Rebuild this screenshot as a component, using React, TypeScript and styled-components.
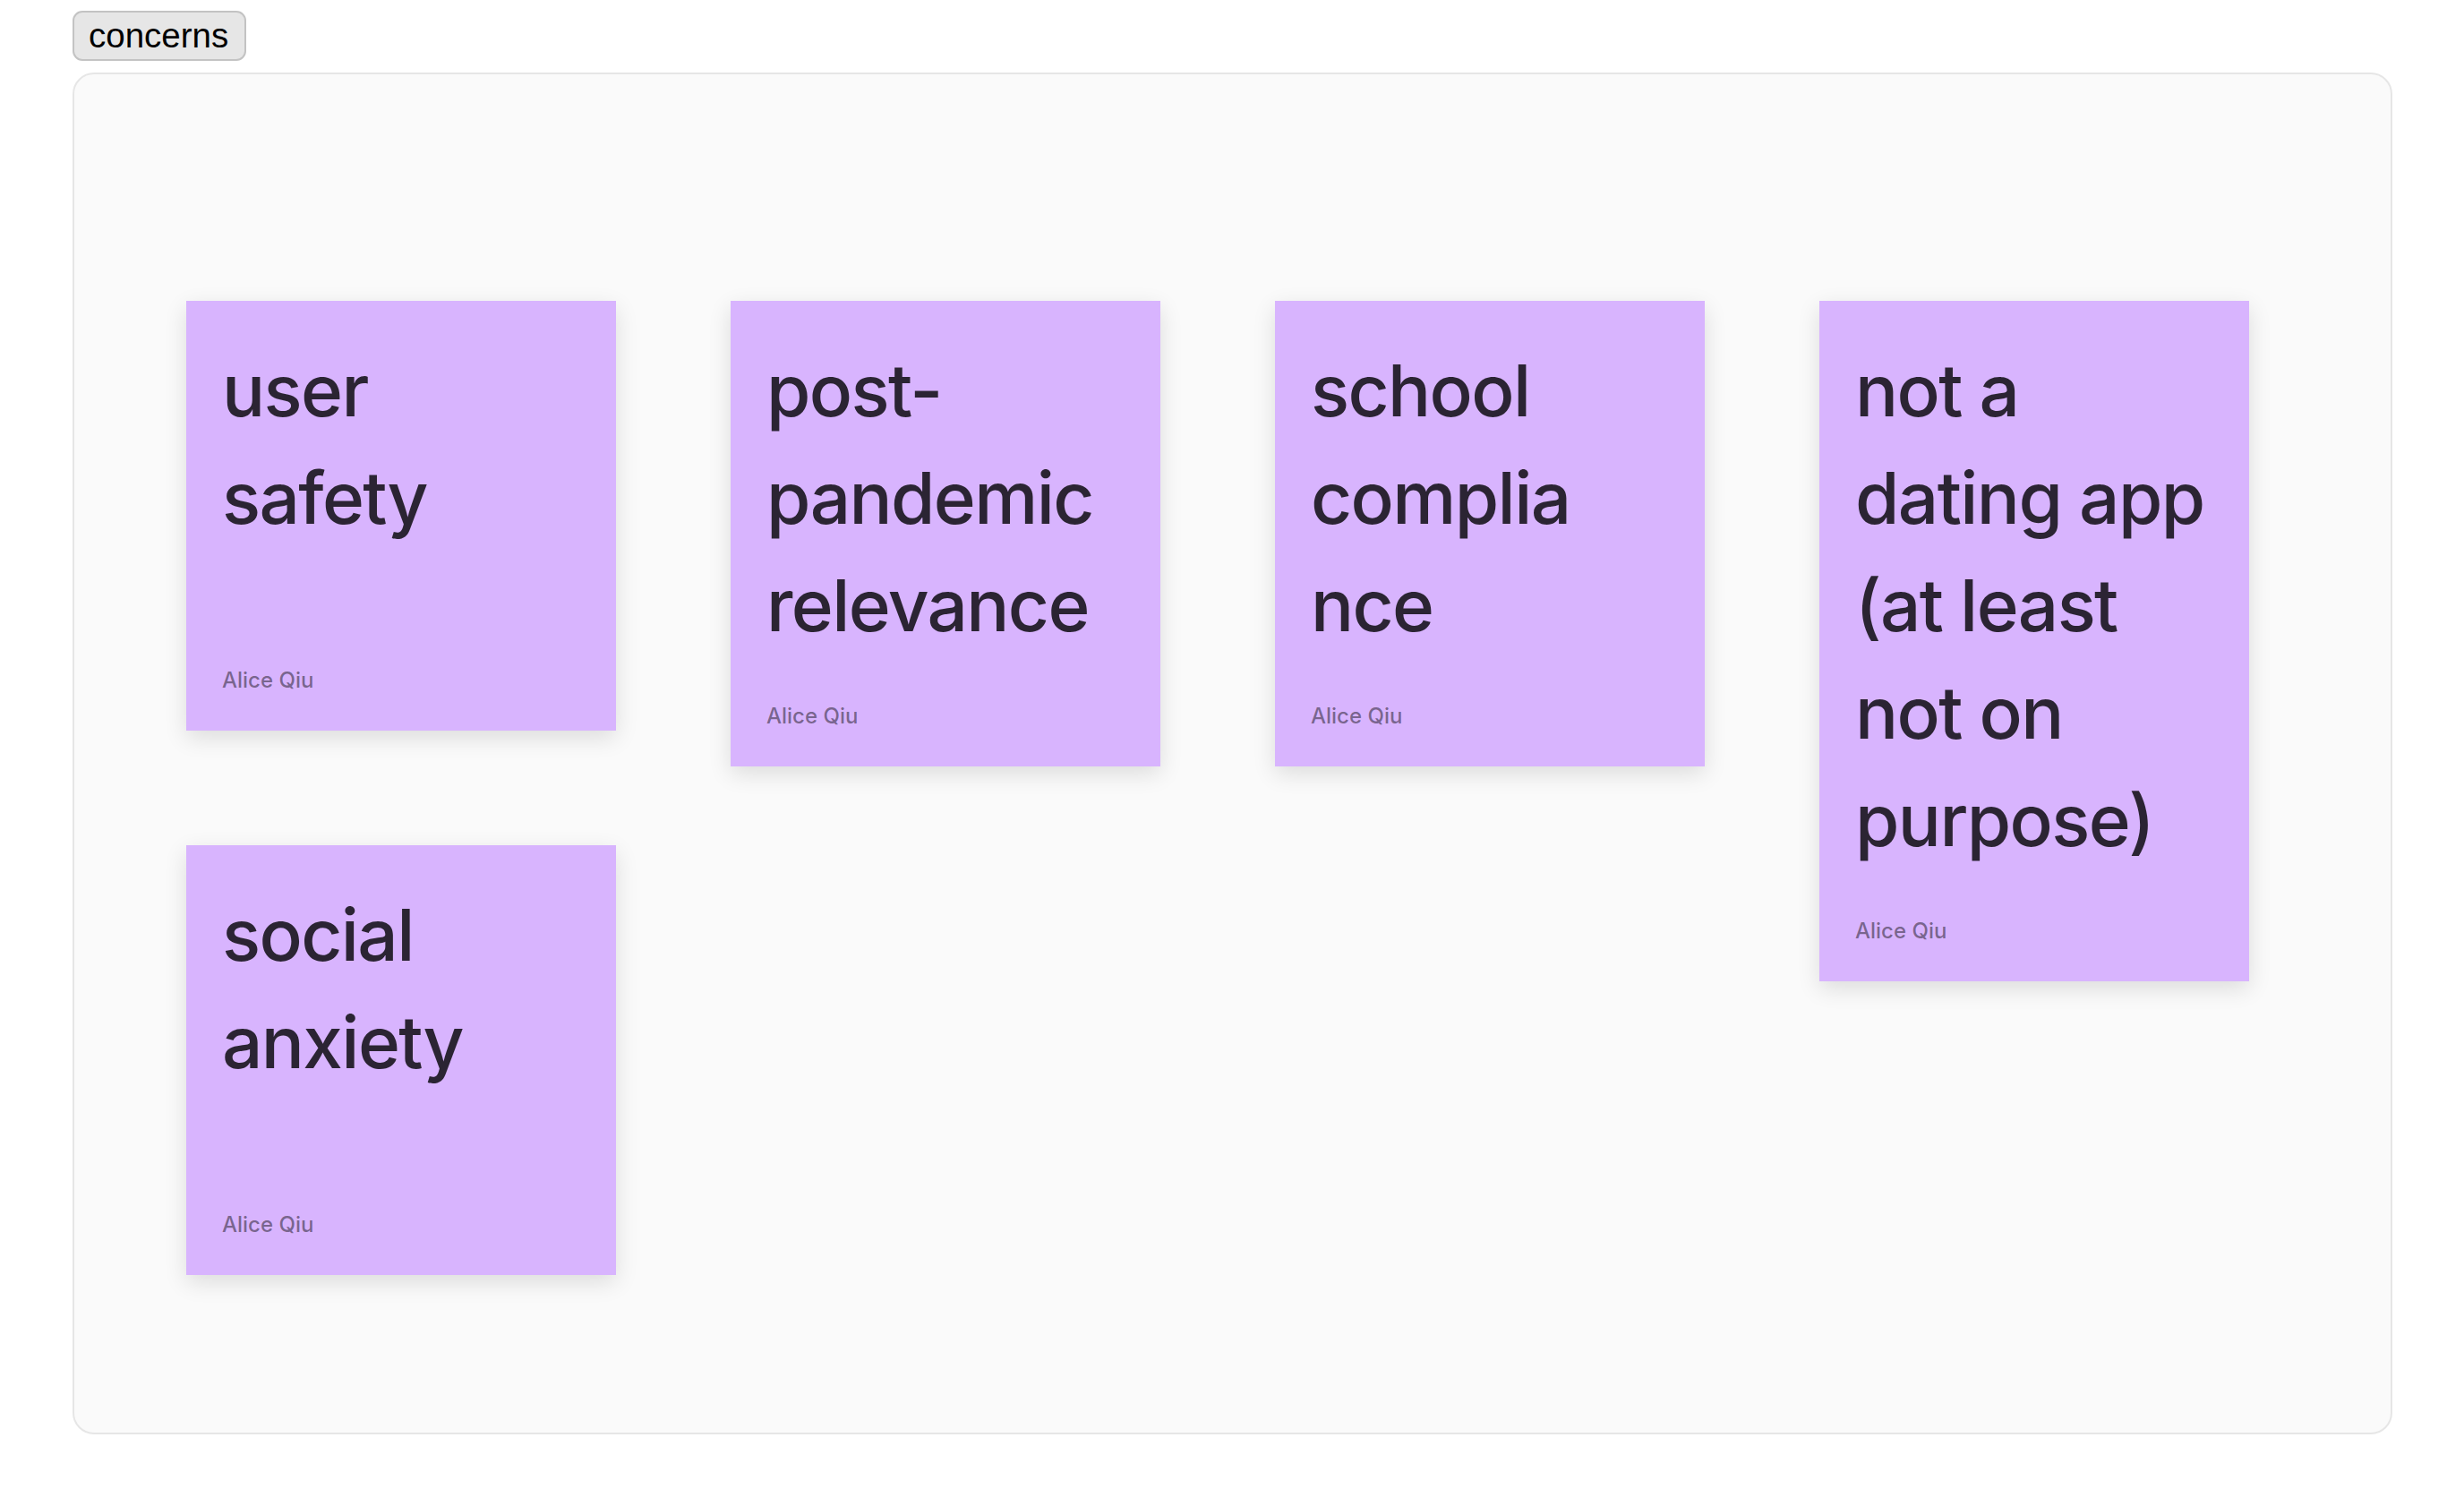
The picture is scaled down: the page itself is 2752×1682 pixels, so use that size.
import React from "react";
import styled, { createGlobalStyle } from "styled-components";

const GlobalStyle = createGlobalStyle`
  html, body {
    margin: 0;
    padding: 0;
    background: #ffffff;
  }
  * {
    box-sizing: border-box;
  }
`;

const Page = styled.div`
  display: flex;
  flex-direction: column;
  align-items: flex-start;
  gap: 14px;
  padding: 12px 80px 0 81px;
`;

const TagButton = styled.button`
  height: 56px;
  padding: 0 18px 0 16px;
  border: 2px solid #c3c3c3;
  border-radius: 11px;
  background: #e6e6e6;
  color: #000000;
  font-family: "Liberation Sans", Arial, sans-serif;
  font-size: 38.5px;
  line-height: 1;
  cursor: pointer;
`;

const Board = styled.section`
  align-self: stretch;
  height: 1521px;
  margin-top: -1px;
  padding: 253px 0 0 125px;
  border: 2px solid #e6e6e6;
  border-radius: 24px;
  background: #fafafa;
`;

const NoteGrid = styled.div`
  display: grid;
  grid-template-columns: repeat(4, 480px);
  grid-auto-rows: 480px;
  column-gap: 128px;
  row-gap: 128px;
  align-items: start;
`;

const Note = styled.article`
  display: flex;
  flex-direction: column;
  justify-content: space-between;
  gap: 46px;
  min-height: 480px;
  padding: 40px 40px 38px;
  background: #d8b4fe;
  box-shadow: 0 8px 24px rgba(0, 0, 0, 0.12);
  font-family: Inter, "Noto Sans", sans-serif;
`;

const NoteText = styled.p`
  margin: 0;
  font-size: 80px;
  font-weight: 450;
  line-height: 1.5;
  letter-spacing: -0.02em;
  color: rgba(0, 0, 0, 0.8);
`;

const Line = styled.span`
  display: block;
  white-space: nowrap;
`;

const Author = styled.span`
  font-size: 24px;
  font-weight: 450;
  line-height: 1.5;
  color: rgba(0, 0, 0, 0.45);
`;

const notes = [
  { lines: ["user", "safety"], author: "Alice Qiu" },
  { lines: ["post-", "pandemic", "relevance"], author: "Alice Qiu" },
  { lines: ["school", "complia", "nce"], author: "Alice Qiu" },
  {
    lines: ["not a", "dating app", "(at least", "not on", "purpose)"],
    author: "Alice Qiu",
  },
  { lines: ["social", "anxiety"], author: "Alice Qiu" },
];

export default function App() {
  return (
    <>
      <GlobalStyle />
      <Page>
        <TagButton>concerns</TagButton>
        <Board>
          <NoteGrid>
            {notes.map((n, i) => (
              <Note key={i}>
                <NoteText>
                  {n.lines.map((l, j) => (
                    <Line key={j}>{l}</Line>
                  ))}
                </NoteText>
                <Author>{n.author}</Author>
              </Note>
            ))}
          </NoteGrid>
        </Board>
      </Page>
    </>
  );
}
